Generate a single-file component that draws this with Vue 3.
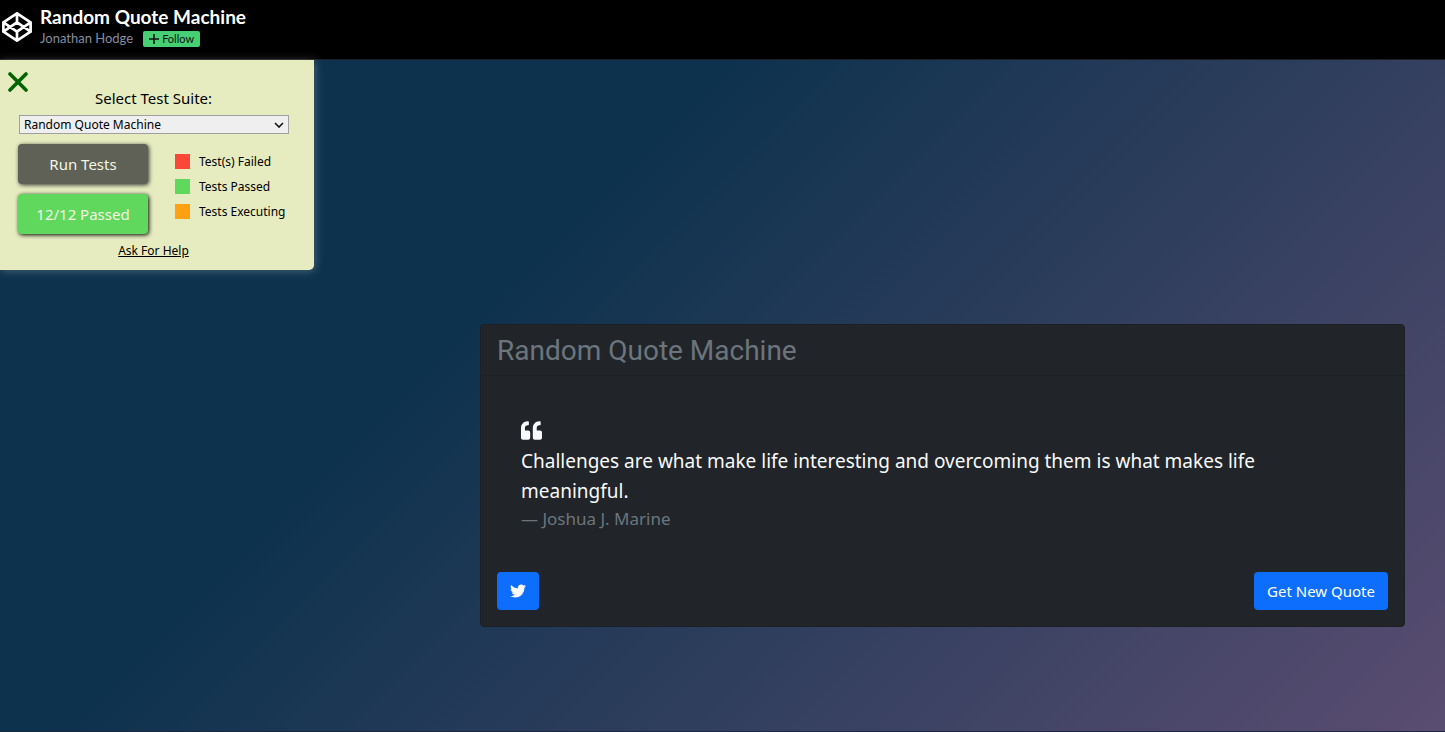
<script setup>
const suites = ['Random Quote Machine']
const legend = [
  { label: 'Test(s) Failed', kind: 'failed' },
  { label: 'Tests Passed', kind: 'passed' },
  { label: 'Tests Executing', kind: 'executing' },
]
</script>

<template>
  <div class="page">
    <header class="topbar">
      <a class="logo" href="#" aria-label="CodePen">
        <svg viewBox="0 0 30 30" width="30" height="30" fill="none" stroke="#fff" stroke-width="2.7" stroke-linejoin="round" stroke-linecap="round">
          <path d="M15 1.4 28.6 10.3v9.4L15 28.6 1.4 19.7v-9.4zM15 1.4v8.9M15 19.7v8.9M1.4 10.3 15 19.7l13.6-9.4M1.4 19.7 15 10.3l13.6 9.4" />
        </svg>
      </a>
      <div class="titles">
        <h1>Random Quote Machine</h1>
        <div class="byline">
          <a href="#" class="author">Jonathan Hodge</a>
          <button class="follow" type="button">
            <svg viewBox="0 0 10 10" width="10" height="10" stroke="#111" stroke-width="1.6"><path d="M5 0v10M0 5h10" /></svg>
            Follow
          </button>
        </div>
      </div>
    </header>

    <main class="stage">
      <aside class="tests">
        <button class="close" type="button" aria-label="Close test panel">
          <svg viewBox="0 0 20 20" width="20" height="20" stroke="#006400" stroke-width="3.6" stroke-linecap="round"><path d="M2 2l16 16M18 2 2 18" /></svg>
        </button>
        <label for="suite">Select Test Suite:</label>
        <div class="select-wrap">
          <select id="suite"><option v-for="s in suites" :key="s">{{ s }}</option></select>
          <svg class="chevron" viewBox="0 0 10 6" width="10" height="6" fill="none" stroke="#111" stroke-width="1.6"><path d="M1 1l4 4 4-4" /></svg>
        </div>
        <div class="grid">
          <div class="actions">
            <button type="button" class="run">Run Tests</button>
            <button type="button" class="result">12/12 Passed</button>
          </div>
          <ul class="legend">
            <li v-for="l in legend" :key="l.kind"><span class="swatch" :class="l.kind"></span>{{ l.label }}</li>
          </ul>
        </div>
        <a class="help" href="#">Ask For Help</a>
      </aside>

      <section class="card">
        <h2>Random Quote Machine</h2>
        <div class="body">
          <figure>
            <svg class="mark" viewBox="0 0 512 512" width="21" height="21" fill="#f8f9fa"><path d="M464 256h-80v-64c0-35.300 28.700-64 64-64h8c13.300 0 24-10.700 24-24V56c0-13.300-10.700-24-24-24h-8c-88.400 0-160 71.600-160 160v240c0 26.500 21.500 48 48 48h128c26.500 0 48-21.500 48-48V304c0-26.500-21.500-48-48-48zm-288 0H96v-64c0-35.300 28.700-64 64-64h8c13.300 0 24-10.700 24-24V56c0-13.300-10.700-24-24-24h-8C71.600 32 0 103.600 0 192v240c0 26.500 21.500 48 48 48h128c26.500 0 48-21.500 48-48V304c0-26.500-21.500-48-48-48z" /></svg>
            <blockquote>Challenges are what make life interesting and overcoming them is what makes life meaningful.</blockquote>
            <figcaption>— Joshua J. Marine</figcaption>
          </figure>
          <div class="buttons">
            <a class="btn" href="#" aria-label="Tweet this quote">
              <svg viewBox="0 0 512 512" width="16" height="16" fill="#fff"><path d="M459.370 151.716c.325 4.548.325 9.097.325 13.645 0 138.720-105.583 298.558-298.558 298.558-59.452 0-114.680-17.219-161.137-47.106 8.447.974 16.568 1.299 25.340 1.299 49.055 0 94.213-16.568 130.274-44.832-46.132-.975-84.792-31.188-98.112-72.772 6.498.974 12.995 1.624 19.818 1.624 9.421 0 18.843-1.300 27.614-3.573-48.081-9.747-84.143-51.980-84.143-102.985v-1.299c13.969 7.797 30.214 12.670 47.431 13.319-28.264-18.843-46.781-51.005-46.781-87.391 0-19.492 5.197-37.360 14.294-52.954 51.655 63.675 129.300 105.258 216.365 109.807-1.624-7.797-2.599-15.918-2.599-24.040 0-57.828 46.782-104.934 104.934-104.934 30.213 0 57.502 12.670 76.670 33.137 23.715-4.548 46.456-13.320 66.599-25.340-7.798 24.366-24.366 44.833-46.132 57.827 21.117-2.273 41.584-8.122 60.426-16.243-14.292 20.791-32.161 39.308-52.628 54.253z" /></svg>
            </a>
            <button class="btn" type="button">Get New Quote</button>
          </div>
        </div>
      </section>
    </main>
  </div>
</template>

<style>
body {
  background: #000;
}
</style>

<style scoped>
* {
  box-sizing: border-box;
}
.page {
  min-height: 100vh;
  display: flex;
  flex-direction: column;
  font-family: 'Noto Sans', sans-serif;
}
.topbar {
  display: flex;
  gap: 8px;
  height: 60px;
  padding: 6px 2px 0;
  background: #000;
  border-bottom: 1px solid #1e1f26;
  font-family: Lato, sans-serif;
}
.logo {
  height: 30px;
  margin-top: 6px;
}
.titles h1 {
  margin: 0;
  color: #fff;
  font-size: 19px;
  line-height: 22px;
  font-weight: 700;
}
.byline {
  display: flex;
  align-items: center;
  gap: 10px;
}
.author {
  color: #868ca0;
  font-size: 13px;
  line-height: 21px;
  text-decoration: none;
}
.follow {
  display: flex;
  align-items: center;
  gap: 3px;
  height: 16px;
  padding: 0 6px;
  border: 0;
  border-radius: 2px;
  background: #47cf73;
  color: #111;
  font: 11px Lato, sans-serif;
}
.stage {
  position: relative;
  flex: 1;
  padding: 264px 40px 104px 0;
  background: linear-gradient(315deg, #7f5a83 0%, #0d324d 74%) top / 100% 200%;
  border-bottom: 1px solid #1b2740;
}
.tests {
  position: absolute;
  top: 0;
  left: 0;
  width: 314px;
  padding: 7px 25px 10px 18px;
  background: #e6ecc0;
  border-radius: 0 0 5px 0;
  box-shadow: 1px 1px 10px rgba(255, 255, 255, 0.25);
  color: #000;
}
.close {
  position: absolute;
  top: 6px;
  left: 2px;
  width: 32px;
  height: 32px;
  padding: 6px;
  border: 0;
  background: none;
}
.close svg {
  display: block;
}
.tests label {
  display: block;
  margin-top: 19px;
  text-align: center;
  font-size: 15px;
  line-height: 24px;
}
.select-wrap {
  position: relative;
  margin: 5px 0 0 1px;
}
.select-wrap select {
  display: block;
  appearance: none;
  width: 100%;
  height: 19px;
  padding: 0 4px;
  border: 1px solid #a0a0a0;
  border-radius: 0;
  background: #efefef;
  color: #000;
  font: 12px 'Noto Sans', sans-serif;
}
.chevron {
  position: absolute;
  right: 5px;
  top: 7px;
  pointer-events: none;
}
.grid {
  display: flex;
  gap: 27px;
  margin-top: 10px;
}
.actions {
  display: flex;
  flex-direction: column;
  gap: 10px;
}
.actions button {
  width: 130px;
  height: 40px;
  padding: 0;
  border: 0;
  border-radius: 4px;
  color: #f4f6e4;
  font: 15px 'Noto Sans', sans-serif;
}
.run {
  background: #5f6056;
  box-shadow: 1px 1px 4px #333;
}
.result {
  background: #60d75d;
  box-shadow: 1px 1px 4px #000;
}
.legend {
  margin: 5px 0 0;
  padding: 0;
  list-style: none;
  font-size: 12px;
  line-height: 25px;
}
.legend li {
  display: flex;
  align-items: center;
  gap: 9px;
}
.swatch {
  width: 15px;
  height: 15px;
}
.failed {
  background: #fb4738;
}
.passed {
  background: #60d75d;
}
.executing {
  background: #ffa012;
}
.help {
  display: block;
  width: fit-content;
  margin: 8px auto 0;
  color: #000;
  font-size: 12px;
  line-height: 18px;
}
.card {
  width: 66%;
  max-width: 925px;
  margin-left: auto;
  background: #212529;
  border: 1px solid #1c1f23;
  border-radius: 4px;
}
.card h2 {
  margin: 0;
  padding: 9px 16px 8px;
  border-bottom: 1px solid #1c1f23;
  color: #6c757d;
  font: 400 28px/33px Roboto, sans-serif;
}
.body {
  padding: 16px;
}
figure {
  margin: 0;
  padding: 24px;
}
.mark {
  display: block;
  margin: 4px 0 5px;
}
blockquote {
  margin: 0;
  color: #f8f9fa;
  font-size: 19px;
  line-height: 30px;
}
figcaption {
  color: #6c757d;
  font-size: 17px;
  line-height: 26px;
}
.buttons {
  display: flex;
  justify-content: space-between;
  margin-top: 16px;
}
.btn {
  display: flex;
  align-items: center;
  height: 38px;
  padding: 0 13px;
  border: 0;
  border-radius: 4px;
  background: #0d6efd;
  color: #fff;
  font: 15px 'Noto Sans', sans-serif;
}
</style>
